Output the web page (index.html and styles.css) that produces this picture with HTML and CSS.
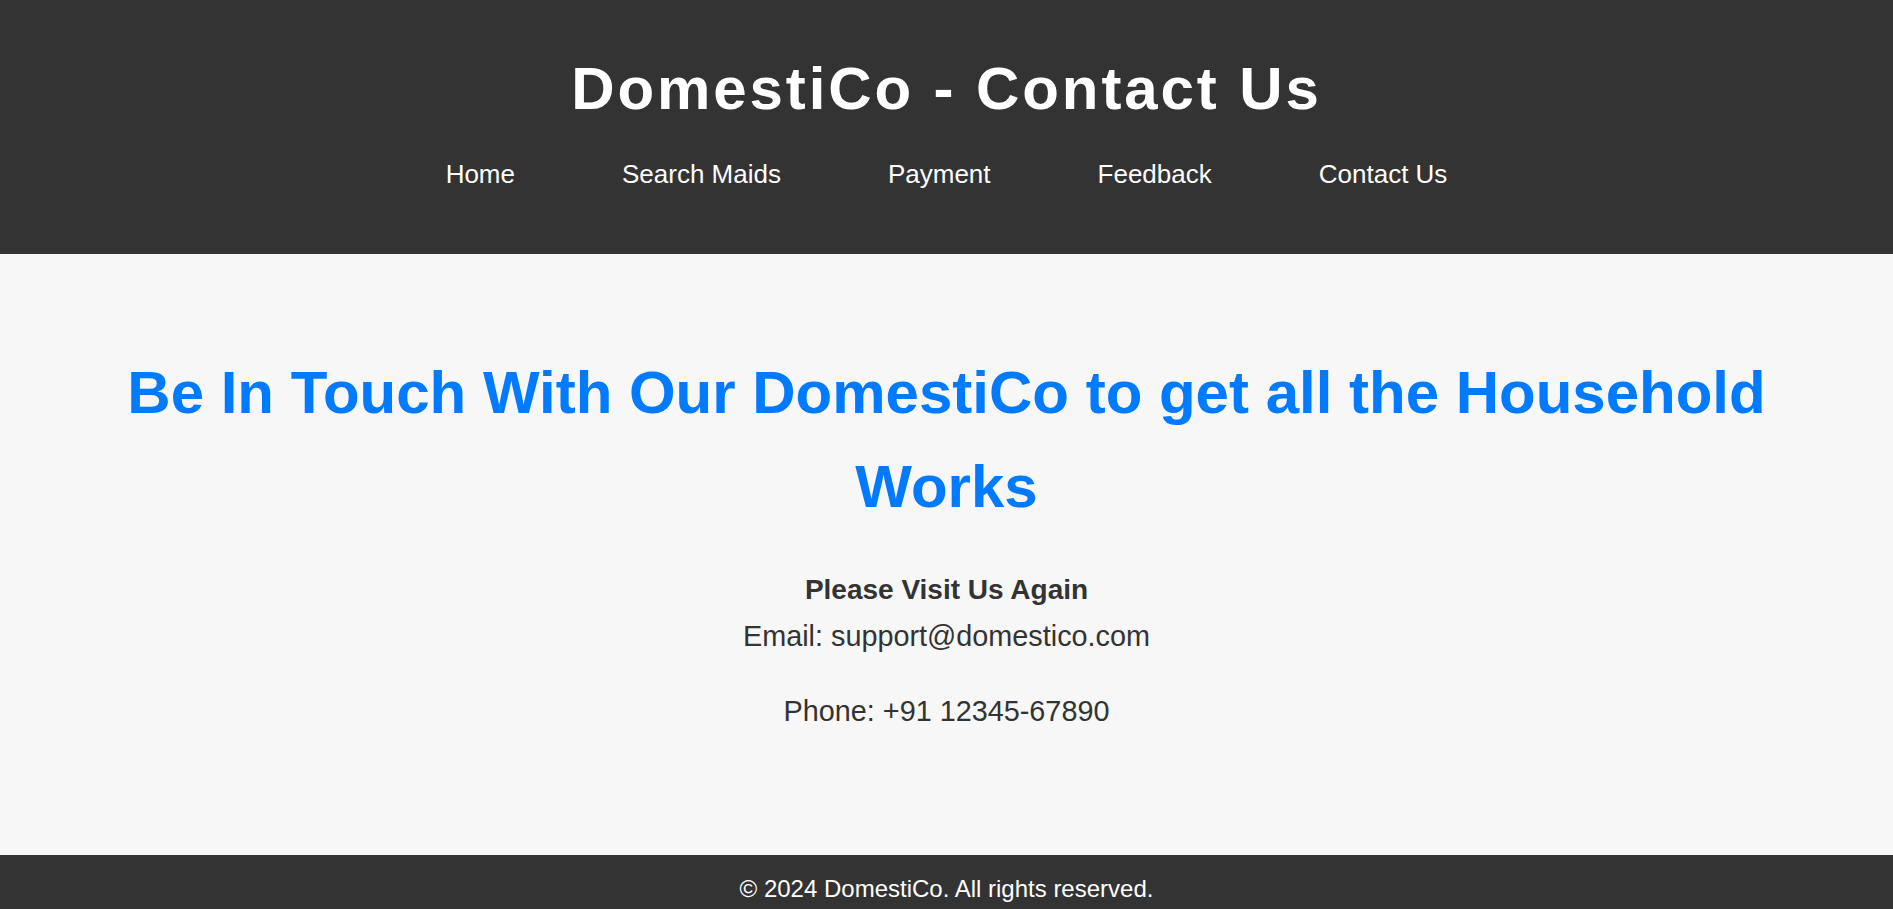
FILE: index.html
```html
<!DOCTYPE html>
<html lang="en">
<head>
<meta charset="utf-8">
<title>DomestiCo - Contact Us</title>
<link rel="stylesheet" href="styles.css">
</head>
<body>
<header class="site-header">
  <h1 class="site-title">DomestiCo - Contact Us</h1>
  <nav class="site-nav">
    <a href="#">Home</a>
    <a href="#">Search Maids</a>
    <a href="#">Payment</a>
    <a href="#">Feedback</a>
    <a href="#">Contact Us</a>
  </nav>
</header>
<main class="contact">
  <h2 class="contact-heading">Be In Touch With Our DomestiCo to get all the Household Works</h2>
  <p class="contact-line"><strong class="contact-lead">Please Visit Us Again</strong><br>Email: support@domestico.com</p>
  <p class="contact-line">Phone: +91 12345-67890</p>
</main>
<footer class="site-footer">
  <p>&copy; 2024 DomestiCo. All rights reserved.</p>
</footer>
</body>
</html>
```

FILE: styles.css
```css
* {
  box-sizing: border-box;
}

html, body {
  margin: 0;
  padding: 0;
}

body {
  font-family: "Liberation Sans", Arial, sans-serif;
  background: #f7f7f7;
  color: #333333;
}

.site-header {
  background: #333333;
  color: #ffffff;
  text-align: center;
  padding: 54px 20px 59px;
}

.site-title {
  margin: 0;
  font-size: 60px;
  line-height: 70px;
  font-weight: bold;
  letter-spacing: 2.9px;
}

.site-nav {
  margin-top: 30px;
  display: flex;
  justify-content: center;
  gap: 107px;
}

.site-nav a {
  color: #ffffff;
  text-decoration: none;
  font-size: 26px;
  line-height: 41px;
}

.contact {
  text-align: center;
  padding: 92px 50px 92px;
}

.contact-heading {
  margin: 0 0 32px;
  color: #007bff;
  font-size: 60px;
  line-height: 94px;
  font-weight: bold;
}

.contact-line {
  margin: 0 0 28px;
  font-size: 28.8px;
  line-height: 47px;
}

.contact-lead {
  font-size: 28px;
}

.site-footer {
  background: #333333;
  color: #ffffff;
  text-align: center;
  padding: 20px;
}

.site-footer p {
  margin: 0;
  font-size: 24px;
}
```
